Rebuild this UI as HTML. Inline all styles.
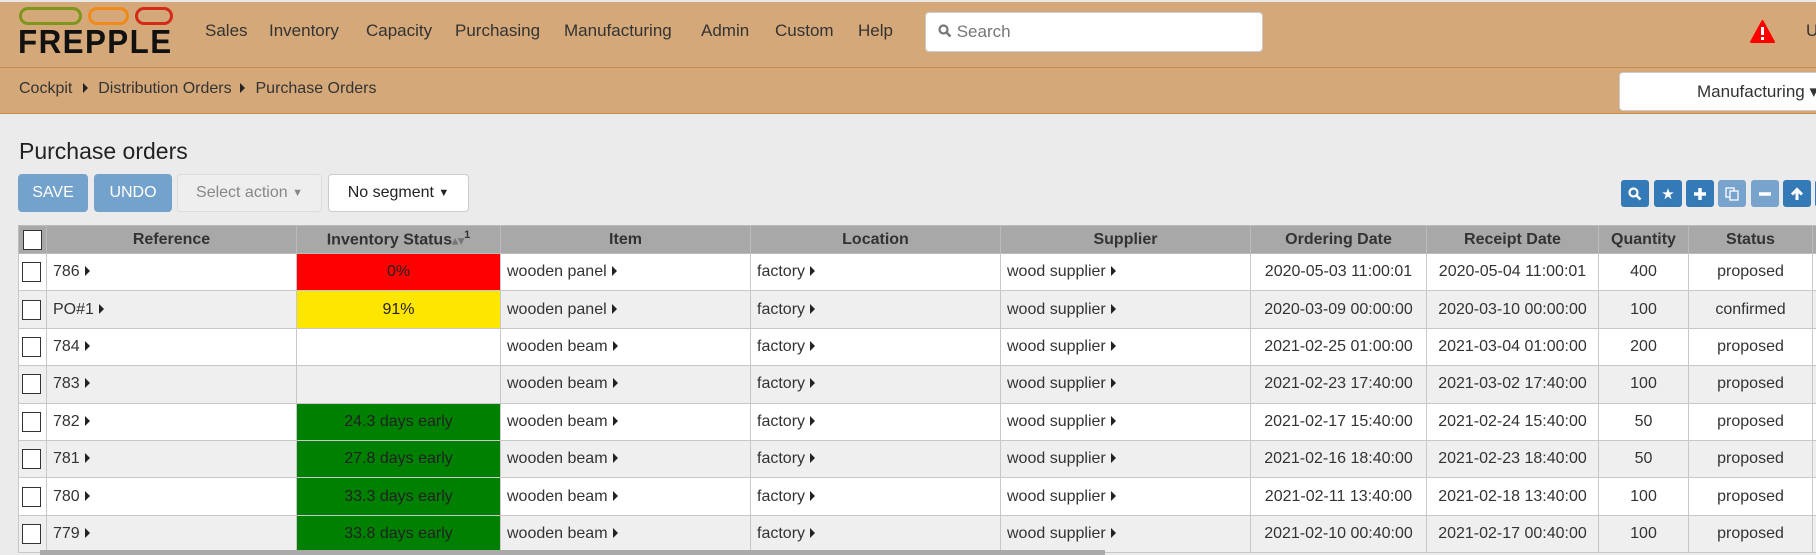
<!DOCTYPE html>
<html><head><meta charset="utf-8"><style>
*{box-sizing:border-box;margin:0;padding:0}
body{width:1816px;height:555px;overflow:hidden;background:#ebebeb;font-family:"Liberation Sans",sans-serif;color:#333;position:relative}
.a{position:absolute}
#hdr{left:0;top:0;width:1816px;height:68px;background:#d4a878;border-top:2px solid #e8e8e8;border-bottom:1px solid #c98a45}
#bc{left:0;top:68px;width:1816px;height:46px;background:#d4a878;border-bottom:1px solid #c98a45}
.nav{top:21px;font-size:17px;color:#333}
.pill{top:7px;height:18px;border-radius:9px;border:3px solid}
.btn{top:174px;height:38px;border-radius:4px;font-size:16px;display:flex;align-items:center;justify-content:center}
.tb{top:180px;width:28px;height:27px;border-radius:3px;background:#337ab7;display:flex;align-items:center;justify-content:center}
table{position:absolute;left:18px;top:225px;border-collapse:collapse;font-size:16px;table-layout:fixed;width:1824px}
td,th{height:37.4px;border:1px solid #c8c8c8;white-space:nowrap;overflow:hidden}
th{height:28px;background:#a8a8a8;color:#333;font-weight:bold;border-color:#bbb;font-size:16px}
td{padding:0 6px}
tr:nth-child(odd) td{background:#efefef}
tr:nth-child(even) td{background:#fff}
.c{text-align:center}
.cb{display:inline-block;width:19px;height:20px;border:1.5px solid #333;background:#fff;vertical-align:middle}
.ar{display:inline-block;width:0;height:0;border-left:5px solid #222;border-top:5px solid transparent;border-bottom:5px solid transparent;margin-left:5px}
td.g{background:#008000!important;color:#222;text-align:center}
</style></head><body>
<div id="hdr" class="a"></div>
<div id="bc" class="a"></div>
<div class="a pill" style="left:19px;width:63px;border-color:#7d961c"></div>
<div class="a pill" style="left:88px;width:41px;border-color:#f08a1a"></div>
<div class="a pill" style="left:135px;width:38px;border-color:#d42a18"></div>
<div class="a" style="left:18px;top:26px;font-size:33px;font-weight:bold;color:#111;line-height:32px;letter-spacing:1.5px;transform:scaleX(0.95);transform-origin:left">FREPPLE</div>
<div class="a nav" style="left:205px">Sales</div>
<div class="a nav" style="left:269px">Inventory</div>
<div class="a nav" style="left:366px">Capacity</div>
<div class="a nav" style="left:455px">Purchasing</div>
<div class="a nav" style="left:564px">Manufacturing</div>
<div class="a nav" style="left:701px">Admin</div>
<div class="a nav" style="left:775px">Custom</div>
<div class="a nav" style="left:858px">Help</div>
<div class="a" style="left:925px;top:12px;width:338px;height:40px;background:#fff;border:1px solid #ccc;border-radius:4px;font-size:17px;color:#777;padding:9px 0 0 12px"><svg width="14" height="14" viewBox="0 0 14 14" style="vertical-align:-1px"><circle cx="5.5" cy="5.5" r="4" stroke="#777" stroke-width="2.2" fill="none"/><path d="M8.5 8.5L12.5 12.5" stroke="#777" stroke-width="2.5"/></svg> Search</div>
<svg class="a" style="left:1750px;top:20px" width="25" height="23" viewBox="0 0 25 23"><path d="M12.5 1L24 22H1Z" fill="#f00" stroke="#f00" stroke-linejoin="round" stroke-width="2"/><rect x="11" y="7" width="3" height="8" fill="#fff"/><rect x="11" y="17" width="3" height="3" fill="#fff"/></svg>
<div class="a nav" style="left:1806px">U</div>
<div class="a" style="left:19px;top:80px;font-size:16px;color:#333">Cockpit <span class="ar" style="margin:0 6px 0 6px"></span> Distribution Orders <span class="ar" style="margin:0 6px 0 4px"></span> Purchase Orders</div>
<div class="a" style="left:1619px;top:72px;width:200px;height:39px;background:#fff;border:1px solid #ccc;border-radius:4px;font-size:17px;padding:9px 0 0 77px;color:#333">Manufacturing ▾</div>
<div class="a" style="left:19px;top:138px;font-size:23px;color:#222">Purchase orders</div>
<div class="a btn" style="left:18px;width:70px;background:#73a2cc;color:#fff">SAVE</div>
<div class="a btn" style="left:94px;width:78px;background:#73a2cc;color:#fff">UNDO</div>
<div class="a btn" style="left:177px;width:145px;background:#eee;border:1px solid #ddd;color:#888">Select action&nbsp;<span style="font-size:11px">▼</span></div>
<div class="a btn" style="left:328px;width:141px;background:#fff;border:1px solid #ccc;color:#222">No segment&nbsp;<span style="font-size:11px">▼</span></div>
<div class="a tb" style="left:1621px"><svg width="14" height="14" viewBox="0 0 14 14"><circle cx="5.5" cy="5.5" r="4" stroke="#fff" stroke-width="2.2" fill="none"/><path d="M8.5 8.5L12.5 12.5" stroke="#fff" stroke-width="2.5"/></svg></div>
<div class="a tb" style="left:1654px;color:#fff;font-size:15px">★</div>
<div class="a tb" style="left:1686px"><svg width="14" height="14"><path d="M7 1V13M1 7H13" stroke="#fff" stroke-width="3.5"/></svg></div>
<div class="a tb" style="left:1718px;background:#77a3cc"><svg width="14" height="14"><rect x="1" y="1" width="8" height="9" fill="none" stroke="#fff" stroke-width="1.3"/><rect x="5" y="4" width="8" height="9" fill="#77a3cc" stroke="#fff" stroke-width="1.3"/></svg></div>
<div class="a tb" style="left:1751px;background:#77a3cc"><svg width="14" height="14"><path d="M1 7H13" stroke="#fff" stroke-width="3.5"/></svg></div>
<div class="a tb" style="left:1783px"><svg width="14" height="14"><path d="M7 13V3M2 7.5L7 2.5L12 7.5" stroke="#fff" stroke-width="3" fill="none"/></svg></div>
<div class="a tb" style="left:1815px"></div>
<table>
<colgroup><col style="width:28px"><col style="width:250px"><col style="width:204px"><col style="width:250px"><col style="width:250px"><col style="width:250px"><col style="width:176px"><col style="width:172px"><col style="width:90px"><col style="width:124px"><col style="width:30px"></colgroup>
<tr><th style="background:#a8a8a8"><span class="cb"></span></th><th>Reference</th><th>Inventory Status<span style="color:#777;font-size:12px">▴▾</span><sup style="font-size:11px">1</sup></th><th>Item</th><th>Location</th><th>Supplier</th><th>Ordering Date</th><th>Receipt Date</th><th>Quantity</th><th>Status</th><th></th></tr>
<tr><td style="padding:0 3px"><span class="cb"></span></td><td>786<span class="ar"></span></td><td class="g" style="background:#f00!important">0%</td><td>wooden panel<span class="ar"></span></td><td>factory<span class="ar"></span></td><td>wood supplier<span class="ar"></span></td><td class="c">2020-05-03 11:00:01</td><td class="c">2020-05-04 11:00:01</td><td class="c">400</td><td class="c">proposed</td><td></td></tr>
<tr><td style="padding:0 3px"><span class="cb"></span></td><td>PO#1<span class="ar"></span></td><td class="g" style="background:#ffe600!important">91%</td><td>wooden panel<span class="ar"></span></td><td>factory<span class="ar"></span></td><td>wood supplier<span class="ar"></span></td><td class="c">2020-03-09 00:00:00</td><td class="c">2020-03-10 00:00:00</td><td class="c">100</td><td class="c">confirmed</td><td></td></tr>
<tr><td style="padding:0 3px"><span class="cb"></span></td><td>784<span class="ar"></span></td><td></td><td>wooden beam<span class="ar"></span></td><td>factory<span class="ar"></span></td><td>wood supplier<span class="ar"></span></td><td class="c">2021-02-25 01:00:00</td><td class="c">2021-03-04 01:00:00</td><td class="c">200</td><td class="c">proposed</td><td></td></tr>
<tr><td style="padding:0 3px"><span class="cb"></span></td><td>783<span class="ar"></span></td><td></td><td>wooden beam<span class="ar"></span></td><td>factory<span class="ar"></span></td><td>wood supplier<span class="ar"></span></td><td class="c">2021-02-23 17:40:00</td><td class="c">2021-03-02 17:40:00</td><td class="c">100</td><td class="c">proposed</td><td></td></tr>
<tr><td style="padding:0 3px"><span class="cb"></span></td><td>782<span class="ar"></span></td><td class="g">24.3 days early</td><td>wooden beam<span class="ar"></span></td><td>factory<span class="ar"></span></td><td>wood supplier<span class="ar"></span></td><td class="c">2021-02-17 15:40:00</td><td class="c">2021-02-24 15:40:00</td><td class="c">50</td><td class="c">proposed</td><td></td></tr>
<tr><td style="padding:0 3px"><span class="cb"></span></td><td>781<span class="ar"></span></td><td class="g">27.8 days early</td><td>wooden beam<span class="ar"></span></td><td>factory<span class="ar"></span></td><td>wood supplier<span class="ar"></span></td><td class="c">2021-02-16 18:40:00</td><td class="c">2021-02-23 18:40:00</td><td class="c">50</td><td class="c">proposed</td><td></td></tr>
<tr><td style="padding:0 3px"><span class="cb"></span></td><td>780<span class="ar"></span></td><td class="g">33.3 days early</td><td>wooden beam<span class="ar"></span></td><td>factory<span class="ar"></span></td><td>wood supplier<span class="ar"></span></td><td class="c">2021-02-11 13:40:00</td><td class="c">2021-02-18 13:40:00</td><td class="c">100</td><td class="c">proposed</td><td></td></tr>
<tr><td style="padding:0 3px"><span class="cb"></span></td><td>779<span class="ar"></span></td><td class="g">33.8 days early</td><td>wooden beam<span class="ar"></span></td><td>factory<span class="ar"></span></td><td>wood supplier<span class="ar"></span></td><td class="c">2021-02-10 00:40:00</td><td class="c">2021-02-17 00:40:00</td><td class="c">100</td><td class="c">proposed</td><td></td></tr>
</table>
<div class="a" style="left:40px;top:550px;width:1065px;height:5px;background:#aaa"></div>
</body></html>
